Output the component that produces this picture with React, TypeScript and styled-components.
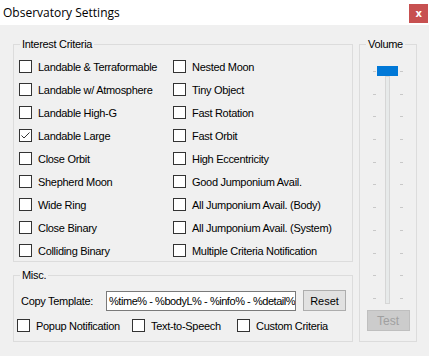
import { createGlobalStyle } from 'styled-components'
import styled from 'styled-components'

const GlobalStyle = createGlobalStyle`
  html, body {
    margin: 0;
    padding: 0;
    background: #f0f0f0;
  }
  body {
    font-family: "Liberation Sans", Arial, sans-serif;
    font-size: 11px;
    letter-spacing: -0.3px;
    color: #000;
  }
`;

const Window = styled.div`
  width: 429px;
  height: 356px;
  display: flex;
  flex-direction: column;
  background: #f0f0f0;
  overflow: hidden;
`;

const TitleBar = styled.div`
  height: 25px;
  background: #fff;
  display: flex;
  align-items: center;
  justify-content: space-between;
  padding: 0 1px 0 3px;
  box-sizing: border-box;
`;

const Title = styled.span`
  font-family: "Open Sans", "Noto Sans", sans-serif;
  font-size: 12px;
  letter-spacing: 0;
  color: #000;
`;

const CloseButton = styled.div`
  width: 19px;
  height: 19px;
  background: #c75050;
  color: #fff;
  font-family: "DejaVu Sans", sans-serif;
  font-weight: bold;
  font-size: 10px;
  display: flex;
  align-items: center;
  justify-content: center;
  margin-top: 1px;
`;

const Body = styled.div`
  display: flex;
  gap: 6px;
  padding: 13px 0 0 13px;
`;

const LeftColumn = styled.div`
  display: flex;
  flex-direction: column;
  gap: 7px;
`;

const Group = styled.fieldset<{ $w: number; $h: number }>`
  margin: 0;
  padding: 0;
  border: 1px solid #dcdcdc;
  width: ${(p) => p.$w}px;
  height: ${(p) => p.$h}px;
  box-sizing: border-box;
  min-width: 0;
`;

const Legend = styled.legend`
  margin-left: 6px;
  padding: 0 2px;
  line-height: 13px;
  font-size: 11px;
`;

const CriteriaGrid = styled.div`
  display: grid;
  grid-template-columns: 154px 1fr;
  grid-auto-rows: 23px;
  padding: 4px 0 0 5px;
`;

const CheckRow = styled.label`
  display: flex;
  align-items: center;
  gap: 6px;
  white-space: nowrap;
`;

const Box = styled.span`
  width: 13px;
  height: 13px;
  box-sizing: border-box;
  border: 1px solid #333;
  background: #fff;
  flex: none;
  display: flex;
  align-items: center;
  justify-content: center;
`;

const MiscBody = styled.div`
  display: flex;
  flex-direction: column;
  gap: 8px;
  padding: 8px 0 0 3px;
`;

const TemplateRow = styled.div`
  display: flex;
  align-items: center;
`;

const TemplateLabel = styled.span`
  width: 85px;
  padding-left: 4px;
`;

const TemplateInput = styled.div`
  width: 190px;
  height: 20px;
  box-sizing: border-box;
  border: 1px solid #7a7a7a;
  background: #fff;
  padding-left: 2px;
  display: flex;
  align-items: center;
  white-space: nowrap;
  overflow: hidden;
  letter-spacing: -0.45px;
`;

const Button = styled.div<{ $disabled?: boolean }>`
  width: 43px;
  height: 21px;
  box-sizing: border-box;
  border: 1px solid ${(p) => (p.$disabled ? '#bfbfbf' : '#adadad')};
  background: ${(p) => (p.$disabled ? '#cccccc' : '#e1e1e1')};
  color: ${(p) => (p.$disabled ? '#a0a0a0' : '#000')};
  display: flex;
  align-items: center;
  justify-content: center;
  font-size: ${(p) => (p.$disabled ? '12px' : '11px')};
  letter-spacing: 0;
`;

const ResetButton = styled(Button)`
  margin-left: 7px;
`;

const OptionRow = styled.div`
  display: flex;
`;

const Option = styled(CheckRow)<{ $w: number }>`
  width: ${(p) => p.$w}px;
`;

const VolumeBody = styled.div`
  display: flex;
  flex-direction: column;
  align-items: center;
  padding-top: 15px;
`;

const SliderArea = styled.div`
  display: flex;
  justify-content: center;
  gap: 1px;
  height: 238px;
  width: 30px;
`;

const TickColumn = styled.div`
  width: 3px;
  display: flex;
  flex-direction: column;
  padding-top: 5px;
  gap: 21.7px;
`;

const Tick = styled.div`
  height: 1px;
  background: #c8c8c8;
  flex: none;
`;

const TrackColumn = styled.div`
  display: flex;
  flex-direction: column;
  align-items: center;
  width: 21px;
  margin-right: 1px;
`;

const Thumb = styled.div`
  width: 21px;
  height: 10px;
  background: #0078d7;
`;

const Track = styled.div`
  width: 5px;
  height: 228px;
  box-sizing: border-box;
  border: 1px solid #d6d6d6;
  background: #e7eaea;
`;

const TestButton = styled(Button)`
  margin-top: 6px;
`;

const leftCriteria = [
  'Landable & Terraformable',
  'Landable w/ Atmosphere',
  'Landable High-G',
  'Landable Large',
  'Close Orbit',
  'Shepherd Moon',
  'Wide Ring',
  'Close Binary',
  'Colliding Binary',
];

const rightCriteria = [
  'Nested Moon',
  'Tiny Object',
  'Fast Rotation',
  'Fast Orbit',
  'High Eccentricity',
  'Good Jumponium Avail.',
  'All Jumponium Avail. (Body)',
  'All Jumponium Avail. (System)',
  'Multiple Criteria Notification',
];

const checked = ['Landable Large'];

const CheckBox = ({ on }: { on?: boolean }) => (
  <Box>
    {on && (
      <svg width="11" height="11" viewBox="0 0 11 11">
        <path d="M1.5 5.5 L4 8 L9.5 2.5" fill="none" stroke="#333" strokeWidth="1" />
      </svg>
    )}
  </Box>
);

const Ticks = () => (
  <TickColumn>
    {Array.from({ length: 11 }).map((_, i) => (
      <Tick key={i} />
    ))}
  </TickColumn>
);

const App = () => {
  const cells: string[] = [];
  leftCriteria.forEach((l, i) => {
    cells.push(l, rightCriteria[i]);
  });

  return (
    <Window>
      <GlobalStyle />
      <TitleBar>
        <Title>Observatory Settings</Title>
        <CloseButton>x</CloseButton>
      </TitleBar>
      <Body>
        <LeftColumn>
          <Group $w={340} $h={224}>
            <Legend>Interest Criteria</Legend>
            <CriteriaGrid>
              {cells.map((c) => (
                <CheckRow key={c}>
                  <CheckBox on={checked.includes(c)} />
                  {c}
                </CheckRow>
              ))}
            </CriteriaGrid>
          </Group>
          <Group $w={340} $h={73}>
            <Legend>Misc.</Legend>
            <MiscBody>
              <TemplateRow>
                <TemplateLabel>Copy Template:</TemplateLabel>
                <TemplateInput>%time% - %bodyL% - %info% - %detail%</TemplateInput>
                <ResetButton>Reset</ResetButton>
              </TemplateRow>
              <OptionRow>
                <Option $w={115}>
                  <CheckBox />
                  Popup Notification
                </Option>
                <Option $w={105}>
                  <CheckBox />
                  Text-to-Speech
                </Option>
                <Option $w={110}>
                  <CheckBox />
                  Custom Criteria
                </Option>
              </OptionRow>
            </MiscBody>
          </Group>
        </LeftColumn>
        <Group $w={58} $h={304}>
          <Legend>Volume</Legend>
          <VolumeBody>
            <SliderArea>
              <Ticks />
              <TrackColumn>
                <Thumb />
                <Track />
              </TrackColumn>
              <Ticks />
            </SliderArea>
            <TestButton $disabled>Test</TestButton>
          </VolumeBody>
        </Group>
      </Body>
    </Window>
  );
};

export default App;
